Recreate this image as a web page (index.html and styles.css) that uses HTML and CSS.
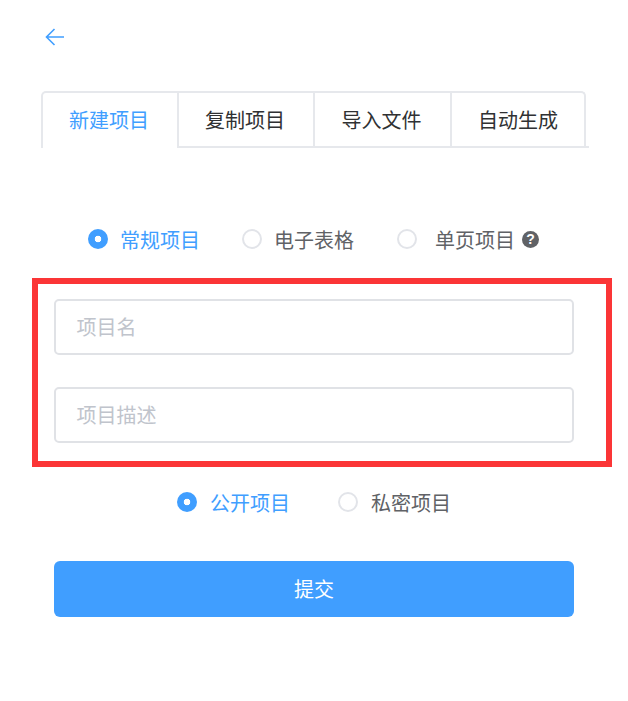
FILE: index.html
```html
<!DOCTYPE html>
<html lang="zh-CN">
<head>
<meta charset="utf-8">
<title>新建项目</title>
<link rel="stylesheet" href="styles.css">
</head>
<body>
<main class="page">
  <a class="back" aria-label="返回">
    <svg class="back-icon" viewBox="0 0 20 18" width="20" height="18" aria-hidden="true"><path d="M19 9H1.5M9.5 1L1.5 9l8 8" fill="none" stroke="#409eff" stroke-width="1.6"/></svg>
  </a>
  <nav class="tabs-bar">
    <div class="tabs">
      <div class="tab tab-active">新建项目</div>
      <div class="tab">复制项目</div>
      <div class="tab">导入文件</div>
      <div class="tab">自动生成</div>
    </div>
  </nav>
  <div class="type-row">
    <label class="radio radio-on"><span class="dot"></span><span>常规项目</span></label>
    <label class="radio"><span class="dot"></span><span>电子表格</span></label>
    <label class="radio radio-wide"><span class="dot"></span><span>单页项目</span><span class="help">?</span></label>
  </div>
  <section class="frame">
    <div class="field">项目名</div>
    <div class="field">项目描述</div>
  </section>
  <div class="visibility-row">
    <label class="radio radio-on"><span class="dot"></span><span>公开项目</span></label>
    <label class="radio"><span class="dot"></span><span>私密项目</span></label>
  </div>
  <button class="submit" type="button">提交</button>
</main>
</body>
</html>
```
FILE: styles.css
```css
* { box-sizing: border-box; }
html, body { margin: 0; padding: 0; background: #fff; }
body {
  width: 628px;
  height: 701px;
  overflow: hidden;
  font-family: "Noto Sans CJK SC", "Liberation Sans", sans-serif;
  font-size: 20px;
  color: #606266;
}
.page { display: flex; flex-direction: column; align-items: flex-start; padding-top: 28px; }
.back { display: block; height: 18px; margin-left: 45px; line-height: 0; }
.tabs-bar {
  width: 548px;
  height: 57px;
  margin: 45px 0 0 41px;
  border-bottom: 2px solid #e6e8ec;
}
.tabs {
  display: grid;
  grid-template-columns: 134px 136px 137px 134px;
  width: 545px;
  height: 57px;
  border: 2px solid #e6e8ec;
  border-bottom: 0;
  border-radius: 5px 5px 0 0;
}
.tab {
  display: flex;
  align-items: center;
  justify-content: center;
  padding-right: 2px;
  color: #303133;
  border-left: 2px solid #e6e8ec;
  border-bottom: 2px solid #e6e8ec;
}
.tab:first-child { border-left: 0; }
.tab:last-child { padding-right: 0; }
.tab-active { color: #409eff; border-bottom-color: #fff; }
.type-row {
  display: flex;
  align-items: center;
  height: 30px;
  margin: 76px 0 0 88px;
}
.radio { display: flex; align-items: center; }
.radio + .radio { margin-left: 42px; }
.dot {
  width: 20px;
  height: 20px;
  margin-right: 12px;
  border: 2px solid #e2e4e9;
  border-radius: 50%;
  background: #fff;
}
.type-row .radio-wide { margin-left: 43px; }
.radio-wide .dot { margin-right: 18px; }
.radio-on { color: #409eff; }
.radio-on .dot { border: 0; background: radial-gradient(circle, #fff 0 3px, #409eff 3.6px); }
.help {
  width: 17px;
  height: 17px;
  margin-left: 7px;
  border-radius: 50%;
  background: #606266;
  color: #fff;
  font-size: 14px;
  font-weight: 700;
  line-height: 17px;
  text-align: center;
  font-family: "Liberation Sans", sans-serif;
}
.frame {
  display: flex;
  flex-direction: column;
  gap: 32px;
  width: 580px;
  height: 189px;
  margin: 24px 0 0 32px;
  padding: 15px 32px 18px 16px;
  border: 6px solid #fb3536;
}
.field {
  height: 56px;
  padding: 0 21px 0 20.5px;
  border: 2px solid #e0e2e6;
  border-radius: 5px;
  color: #c0c4cc;
  line-height: 52px;
}
.visibility-row {
  display: flex;
  align-items: center;
  height: 30px;
  margin: 20px 0 0 177px;
}
.visibility-row .dot { margin-right: 13px; }
.visibility-row .radio + .radio { margin-left: 48px; }
.submit {
  width: 520px;
  height: 56px;
  margin: 44px 0 0 54px;
  padding: 0 0 2px;
  border: 0;
  border-radius: 6px;
  background: #409eff;
  color: #fff;
  font: inherit;
}
```
